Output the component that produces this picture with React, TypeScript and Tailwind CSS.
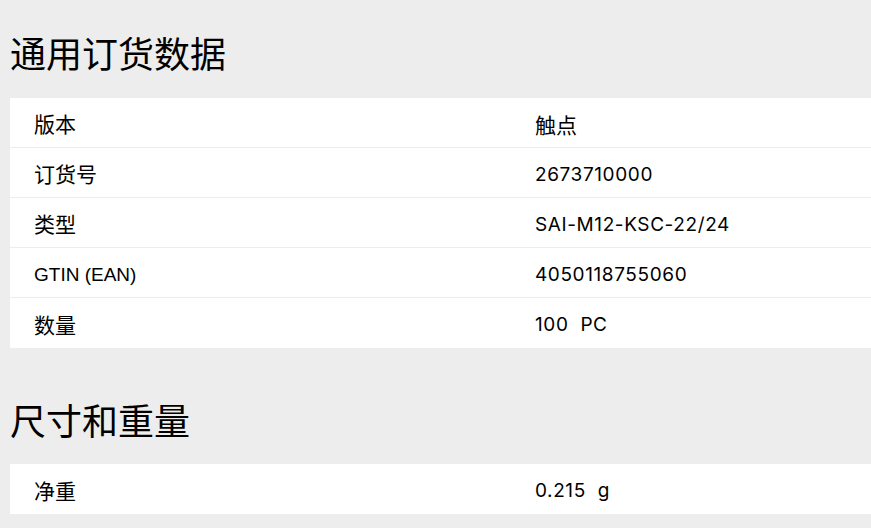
import React from "react";

type Row = { label: string; value: string };

const orderRows: Row[] = [
  { label: "版本", value: "触点" },
  { label: "订货号", value: "2673710000" },
  { label: "类型", value: "SAI-M12-KSC-22/24" },
  { label: "GTIN (EAN)", value: "4050118755060" },
  { label: "数量", value: "100\u00a0\u00a0PC" },
];

const weightRows: Row[] = [{ label: "净重", value: "0.215\u00a0\u00a0g" }];

// CJK glyphs in the reference render a touch bigger than the latin text
const isCjk = (s: string) => /[\u4e00-\u9fff]/.test(s);

function DataTable({ rows }: { rows: Row[] }) {
  return (
    <div className="w-[1002px] bg-white">
      {rows.map((r, i) => (
        <div
          key={r.label}
          className={
            "grid h-[50px] grid-cols-[501px_1fr] items-center pt-[5px] " +
            (i < rows.length - 1 ? "border-b border-[#ececec]" : "")
          }
        >
          <div
            className={
              "pl-6 font-['Liberation_Sans','Noto_Sans_CJK_SC',sans-serif] text-black " +
              (isCjk(r.label) ? "text-[21px]" : "text-[19px]")
            }
          >
            {r.label}
          </div>
          <div
            className={
              "pl-6 text-black " +
              (isCjk(r.value)
                ? "font-['Noto_Sans_CJK_SC',sans-serif] text-[21px]"
                : "font-['Inter',sans-serif] text-[19px] tracking-[0.6px]")
            }
          >
            {r.value}
          </div>
        </div>
      ))}
    </div>
  );
}

export default function App() {
  return (
    <div className="h-[528px] w-[871px] overflow-hidden bg-[#ededed] pl-[10px]">
      <h2 className="pt-[30px] font-['Noto_Sans_CJK_SC',sans-serif] text-[36px] leading-[44px] text-black">
        通用订货数据
      </h2>
      <div className="mt-[24px]">
        <DataTable rows={orderRows} />
      </div>
      <h2 className="mt-[49px] font-['Noto_Sans_CJK_SC',sans-serif] text-[36px] leading-[44px] text-black">
        尺寸和重量
      </h2>
      <div className="mt-[23px]">
        <DataTable rows={weightRows} />
      </div>
    </div>
  );
}
